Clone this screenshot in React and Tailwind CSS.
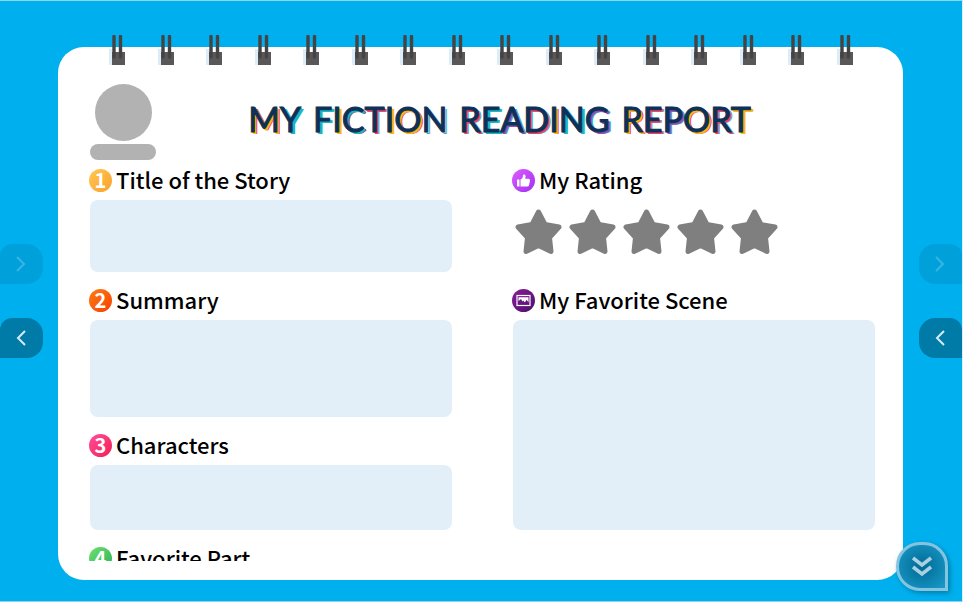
import React from "react";

const RINGS = Array.from({ length: 16 }, (_, i) => i);
const STARS = [1, 2, 3, 4, 5];

const gold = "text-shadow-[1px_1px_0_#fdb515,2px_2px_0_#fdb515,3px_2px_0_#fdb515]";
const teal = "text-shadow-[1px_1px_0_#1cb5c1,2px_2px_0_#1cb5c1,3px_2px_0_#1cb5c1]";
const lilac = "text-shadow-[1px_1px_0_#e9d9ea,2px_2px_0_#1cb5c1,3px_2px_0_#e9d9ea]";
const goldRed = "text-shadow-[1px_1px_0_#fdb515,2px_2px_0_#fdb515,3px_2px_0_#ef3f63]";
const redTeal = "text-shadow-[1px_1px_0_#ef3f63,2px_2px_0_#ef3f63,3px_2px_0_#1cb5c1]";
const tealRed = "text-shadow-[1px_1px_0_#1cb5c1,2px_2px_0_#1cb5c1,3px_2px_0_#ef3f63]";
const purple = "text-shadow-[1px_1px_0_#8e4fb0,2px_2px_0_#8e4fb0,3px_2px_0_#1cb5c1]";

const WORDS = [
  [["M", goldRed], ["Y", teal]],
  [["F", teal], ["I", gold], ["C", tealRed], ["T", redTeal], ["I", gold], ["O", goldRed], ["N", lilac]],
  [["R", redTeal], ["E", teal], ["A", purple], ["D", redTeal], ["I", goldRed], ["N", teal], ["G", purple]],
  [["R", goldRed], ["E", redTeal], ["P", purple], ["O", goldRed], ["R", redTeal], ["T", gold]],
];

function Title() {
  return (
    <h1 className="flex flex-1 justify-center gap-3 pr-8 font-['Lato'] text-[34px] leading-10 font-normal text-[#0d3158] [-webkit-text-stroke:1px_#0d3158]">
      {WORDS.map((word, i) => (
        <span key={i}>
          {word.map(([letter, shade], j) => (
            <span key={j} className={shade}>{letter}</span>
          ))}
        </span>
      ))}
    </h1>
  );
}

function Badge({ tone, children }) {
  return (
    <span className={`flex size-[23px] shrink-0 items-center justify-center rounded-full bg-linear-to-br text-xl leading-5 font-bold text-white ${tone}`}>
      {children}
    </span>
  );
}

function Heading({ htmlFor, tone, badge, children }) {
  const Tag = htmlFor ? "label" : "h2";
  return (
    <Tag htmlFor={htmlFor} className="-ml-px flex h-[38px] items-center gap-1 pb-0.5 text-[22px] leading-8 font-medium whitespace-nowrap text-black">
      <Badge tone={tone}>{badge}</Badge>
      <span className="pb-0.5">{children}</span>
    </Tag>
  );
}

function Field({ id, height, ...heading }) {
  return (
    <div>
      <Heading htmlFor={id} {...heading} />
      <textarea id={id} className={`block w-full resize-none rounded-lg bg-[#e2eff8] p-3 outline-none ${height}`} />
    </div>
  );
}

function Star() {
  return (
    <svg viewBox="0 0 47 46" className="h-[46px] w-[47px]" fill="#7f7f7f" stroke="#7f7f7f" strokeWidth="5" strokeLinejoin="round">
      <path d="M23.5 3 L30 15.5 L44 18 L34.5 28.500 L36 42.500 L23.500 36.500 L11 42.500 L12.500 28.500 L3 18 L17 15.500 Z" />
    </svg>
  );
}

function ThumbIcon() {
  return (
    <svg viewBox="0 0 23 23" className="size-[23px]" fill="#fff">
      <rect x="5" y="10.500" width="2.500" height="7" rx=".5" />
      <path d="M8.500 10.500 C10.500 9.500 11 8 11 6.500 C11 5.200 13.600 5.200 13.600 7.500 L13.200 9.800 H16.500 Q18 9.800 18 11.300 L17 16.500 Q16.700 17.500 15.500 17.500 H8.500 Z" />
    </svg>
  );
}

function PictureIcon() {
  return (
    <svg viewBox="0 0 23 23" className="size-[23px]">
      <rect x="5" y="6.500" width="13" height="10" fill="none" stroke="#fff" strokeWidth="1.200" />
      <path d="M6.500 8.300 H16.500 V13.500 L14.700 10.800 L12.800 13.500 L11.500 11.500 L10.500 12.500 L9 10 L6.500 12 Z" fill="#fff" />
    </svg>
  );
}

function Chevron({ back }) {
  return (
    <svg viewBox="0 0 10 16" className="h-4 w-2.5" fill="none" stroke="currentColor" strokeWidth="2">
      <path d={back ? "M9 1 L2 8 L9 15" : "M1 1 L8 8 L1 15"} />
    </svg>
  );
}

function SideTabs({ shape }) {
  return (
    <nav className="flex w-[43px] shrink-0 flex-col gap-[34px] pt-[243px]">
      <button type="button" aria-label="Next" disabled className={`flex h-10 items-center justify-center bg-[#00a0da] pr-0.5 text-[#36b6e3] ${shape}`}>
        <Chevron />
      </button>
      <button type="button" aria-label="Previous" className={`flex h-10 items-center justify-center bg-[#007ba8] pr-0.5 text-[#d5ecf5] ${shape}`}>
        <Chevron back />
      </button>
    </nav>
  );
}

function Ring() {
  return (
    <svg viewBox="0 0 16 31" className="h-[31px] w-4">
      <rect x="0" y="14" width="4" height="16" fill="#dcecf8" />
      <rect x="3" y="17" width="13" height="13" fill="#595757" />
      <path d="M5 1.500 V22 M11.500 1.500 V22" stroke="#454343" strokeWidth="3.400" strokeLinecap="round" />
    </svg>
  );
}

function ScrollDown() {
  return (
    <button type="button" aria-label="Scroll down" className="absolute right-[14px] bottom-[10px] flex h-[49px] w-[52px] items-center justify-center rounded-[24px] rounded-br-none border-3 border-[#84c4e0] bg-radial from-[#006a94] to-[#1a9bcb] shadow-[2px_2px_5px_#00507088]">
      <svg viewBox="0 0 20 22" className="h-[22px] w-5" fill="none" stroke="#a9cfe0" strokeWidth="3.500">
        <path d="M1 2 L10 9 L19 2 M1 11 L10 18 L19 11" />
      </svg>
    </button>
  );
}

export default function App() {
  return (
    <div className="relative flex h-screen overflow-hidden border-t border-r border-b border-[#8cd8f0] border-r-[#d8f0fa] bg-[#00b0ee] font-['Noto_Sans_CJK_JP',sans-serif]">
      <SideTabs shape="rounded-r-2xl rounded-tl-xl" />
      <main className="relative mr-4 mt-[46px] mb-[21px] ml-[15px] flex min-w-0 flex-1 flex-col rounded-[26px] bg-white pt-[37px] pr-7 pb-[19px] pl-8">
        <div className="absolute -top-3 right-[50px] left-[51px] flex justify-between">
          {RINGS.map((n) => <Ring key={n} />)}
        </div>
        <header className="flex h-[78px] shrink-0 items-start">
          <div role="img" aria-label="Reader" className="flex w-[66px] flex-col items-center gap-[3px]">
            <span className="size-[57px] rounded-full bg-[#b2b2b2]" />
            <span className="h-4 w-full rounded-full bg-[#b2b2b2]" />
          </div>
          <div className="flex flex-1 pt-[15px]">
            <Title />
          </div>
        </header>
        <div className="-ml-px grid min-h-0 flex-1 grid-cols-2 gap-x-[61px] overflow-hidden pl-px">
          <section className="flex flex-col gap-[10px]">
            <Field id="title" height="h-[72px]" tone="from-[#ffc94f] to-[#f9a02f]" badge="1">Title of the Story</Field>
            <Field id="summary" height="h-[97px]" tone="from-[#ff7a10] to-[#f53d05]" badge="2">Summary</Field>
            <Field id="characters" height="h-[65px]" tone="from-[#ff4c9a] to-[#f51452]" badge="3">Characters</Field>
            <Field id="favorite" height="h-16" tone="from-[#6fe06a] to-[#22b15c]" badge="4">Favorite Part</Field>
          </section>
          <section className="flex flex-col gap-[10px]">
            <div>
              <Heading tone="from-[#dc5cff] to-[#a42bf2]" badge={<ThumbIcon />}>My Rating</Heading>
              <div className="flex h-[72px] items-start gap-[7px] pt-[9px] pl-0.5">
                {STARS.map((n) => (
                  <button key={n} type="button" aria-label={`Rate ${n}`}><Star /></button>
                ))}
              </div>
            </div>
            <Field id="scene" height="h-[210px]" tone="from-[#8a1c98] to-[#4d0f6b]" badge={<PictureIcon />}>My Favorite Scene</Field>
          </section>
        </div>
      </main>
      <SideTabs shape="rounded-l-2xl rounded-tr-xl" />
      <ScrollDown />
    </div>
  );
}
